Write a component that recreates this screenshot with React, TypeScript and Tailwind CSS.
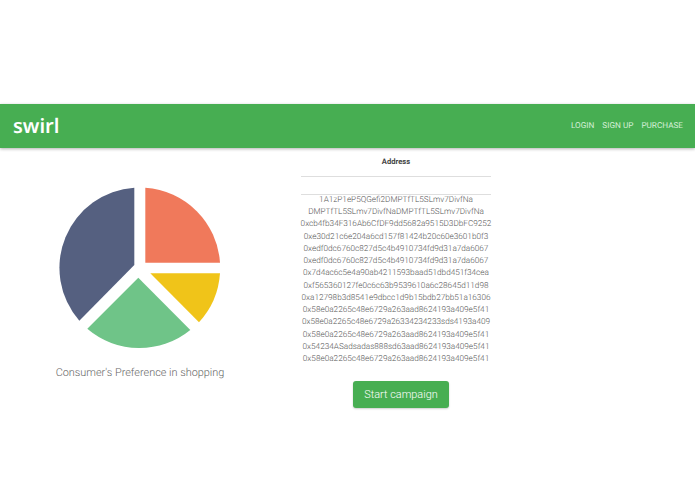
const addresses = [
  '1A1zP1eP5QGefi2DMPTfTL5SLmv7DivfNa',
  'DMPTfTL5SLmv7DivfNaDMPTfTL5SLmv7DivfNa',
  '0xcb4fb34F316Ab6CfDF9dd5682a9515D3DbFC9252',
  '0xe30d21c6e204a6cd157f81424b20c60e3601b0f3',
  '0xedf0dc6760c827d5c4b4910734fd9d31a7da6067',
  '0xedf0dc6760c827d5c4b4910734fd9d31a7da6067',
  '0x7d4ac6c5e4a90ab4211593baad51dbd451f34cea',
  '0xf565360127fe0c6c63b9539610a6c28645d11d98',
  '0xa12798b3d8541e9dbcc1d9b15bdb27bb51a16306',
  '0x58e0a2265c48e6729a263aad8624193a409e5f41',
  '0x58e0a2265c48e6729a26334234233sds4193a409',
  '0x58e0a2265c48e6729a263aad8624193a409e5f41',
  '0x54234ASadsadas888sd63aad8624193a409e5f41',
  '0x58e0a2265c48e6729a263aad8624193a409e5f41',
];

function PieChart() {
  return (
    <svg width="162" height="162" viewBox="59 187 162 162">
      <path d="M145.3 187.7 A80.3 80.3 0 0 1 220 262.7 L145.3 262.7 Z" fill="#f0795b" />
      <path d="M150.3 273.3 L220 273.3 A80.3 80.3 0 0 1 199 322.3 Z" fill="#f0c419" />
      <path d="M138.3 277.7 L190.3 330 A80.3 80.3 0 0 1 87.3 328.7 Z" fill="#6fc488" />
      <path d="M134.3 187.7 L134.3 265 L79.3 320.7 A80.3 80.3 0 0 1 134.3 187.7 Z" fill="#556080" />
    </svg>
  );
}

export default function App() {
  return (
    <div className="min-h-screen bg-white pt-[104px] font-['Roboto',sans-serif] [text-rendering:geometricPrecision]">
      <header className="flex h-[44px] items-center justify-between bg-[#47ae52] pl-[13px] pr-[12px] shadow-[0_1px_3px_rgba(0,0,0,0.3)]">
        <span className="font-['Noto_Sans',sans-serif] text-[20px] font-semibold leading-none text-white">swirl</span>
        <nav className="flex gap-[8px] text-[8.2px] font-normal text-[#d5efd8]">
          <span>LOGIN</span>
          <span>SIGN UP</span>
          <span>PURCHASE</span>
        </nav>
      </header>

      <main className="flex">
        <section className="flex w-[280px] flex-col items-center pt-[39px]">
          <PieChart />
          <p className="mt-[15px] text-[10.9px] font-light leading-[18px] text-[#666]">Consumer's Preference in shopping</p>
        </section>

        <section className="ml-[21px] flex w-[190px] flex-col items-center">
          <h2 className="mt-[9px] text-[7.6px] font-bold leading-[10px] text-[#444]">Address</h2>
          <div className="mt-[9px] h-[19px] w-full border-y border-[#dedede]" />
          <ul className="flex w-[220px] -translate-y-px flex-col items-center text-[8.2px] font-light leading-[12.23px] text-[#555]">
            {addresses.map((address, i) => (
              <li key={i} className="whitespace-nowrap">{address}</li>
            ))}
          </ul>
          <button className="ml-[10px] mt-[15px] h-[27px] w-[96px] rounded-[3px] bg-[#47ae52] text-[10.9px] font-light text-white shadow-[0_1px_2px_rgba(0,0,0,0.2)]">
            Start campaign
          </button>
        </section>
      </main>
    </div>
  );
}
